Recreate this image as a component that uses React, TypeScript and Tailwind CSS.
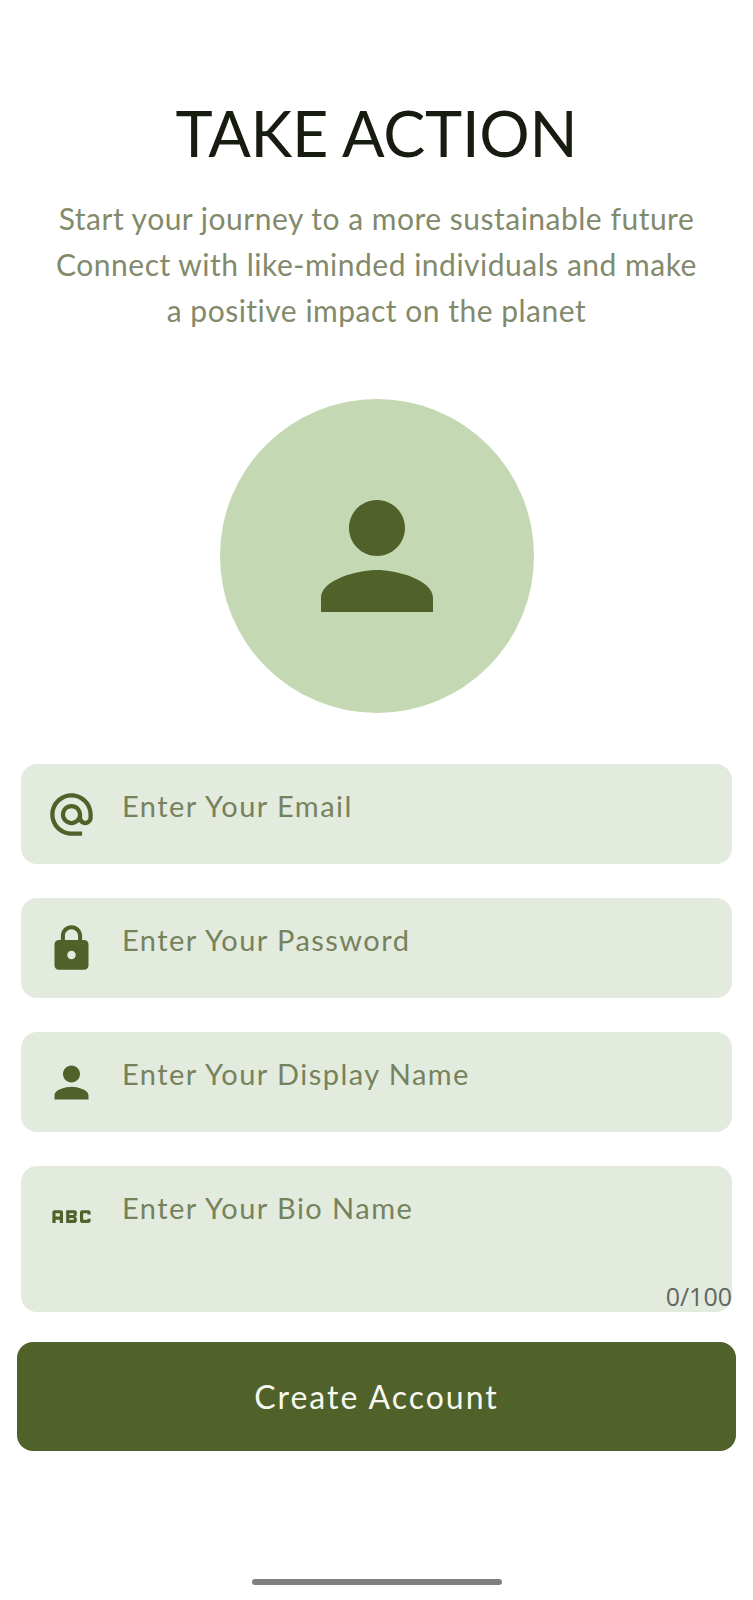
import { MdAbc, MdAlternateEmail, MdLock, MdPerson } from 'react-icons/md';
import type { IconType } from 'react-icons';

function Field({ icon: Icon, label, tall }: { icon: IconType; label: string; tall?: boolean }) {
    return (
        <div className={`relative flex items-start rounded-[16px] bg-[#e3ebdf] ${tall ? 'h-[146px]' : 'h-[100px]'}`}>
            <div className="flex h-[100px] w-[101px] flex-shrink-0 items-center justify-center pr-px">
                <Icon className="h-[51px] w-[51px] text-[#50612a]" />
            </div>
            <span className="pt-[24px] font-['Lato',sans-serif] text-[29px] leading-[36px] tracking-[1.45px] text-[#76825c]">
                {label}
            </span>
            {tall && (
                <span className="absolute right-0 bottom-[2px] font-['Open_Sans',sans-serif] text-[25px] leading-[28px] text-[#5f6660]">
                    0/100
                </span>
            )}
        </div>
    );
}

export default function App() {
    return (
        <div className="flex h-[1600px] flex-col bg-white">
            {/* Header */}
            <div className="flex flex-col items-center pt-[93px] font-['Lato',sans-serif]">
                <h1 className="text-[63px] leading-[80px] font-normal tracking-[-0.25px] text-[#171c10]">TAKE ACTION</h1>
                <p className="mt-[22px] text-center text-[30px] leading-[46px] tracking-[0.5px] text-[#828a6c]">
                    Start your journey to a more sustainable future
                    <br />
                    Connect with like-minded individuals and make
                    <br />
                    a positive impact on the planet
                </p>
            </div>

            {/* Avatar */}
            <div className="mx-auto mt-[66px] flex h-[314px] w-[314px] items-center justify-center rounded-full bg-[#c5d8b4]">
                <MdPerson className="h-[168px] w-[168px] text-[#50612a]" />
            </div>

            {/* Form */}
            <div className="mt-[51px] flex flex-col gap-[34px] px-[21px]">
                <Field icon={MdAlternateEmail} label="Enter Your Email" />
                <Field icon={MdLock} label="Enter Your Password" />
                <Field icon={MdPerson} label="Enter Your Display Name" />
                <Field icon={MdAbc} label="Enter Your Bio Name" tall />
            </div>

            <button className="mx-[17px] mt-[30px] h-[109px] rounded-[16px] bg-[#50612a] font-['Lato',sans-serif] text-[32px] tracking-[2px] text-[#f6f8ef]">
                Create Account
            </button>

            {/* Home indicator */}
            <div className="mx-auto mt-auto mb-[15px] h-[6px] w-[250px] rounded-full bg-[#808080]" />
        </div>
    );
}
